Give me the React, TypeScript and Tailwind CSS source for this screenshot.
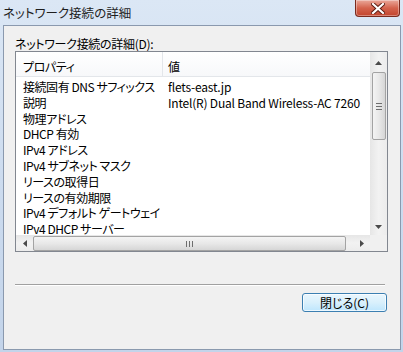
import React from "react";

const rows: [string, string][] = [
  ["接続固有 DNS サフィックス", "flets-east.jp"],
  ["説明", "Intel(R) Dual Band Wireless-AC 7260"],
  ["物理アドレス", ""],
  ["DHCP 有効", ""],
  ["IPv4 アドレス", ""],
  ["IPv4 サブネット マスク", ""],
  ["リースの取得日", ""],
  ["リースの有効期限", ""],
  ["IPv4 デフォルト ゲートウェイ", ""],
  ["IPv4 DHCP サーバー", ""],
];

function Tri({ dir }: { dir: "up" | "down" | "left" | "right" }) {
  const pts =
    dir === "up"
      ? "0,4 7,4 3.5,0"
      : dir === "down"
      ? "0,0 7,0 3.5,4"
      : dir === "left"
      ? "4,0 4,7 0,3.5"
      : "0,0 0,7 4,3.5";
  const w = dir === "up" || dir === "down" ? 7 : 4;
  const h = dir === "up" || dir === "down" ? 4 : 7;
  return (
    <svg width={w} height={h} viewBox={`0 0 ${w} ${h}`}>
      <polygon points={pts} fill="#4a4a4a" />
    </svg>
  );
}

export default function App() {
  return (
    <div
      className="w-[403px] h-[352px] flex flex-col bg-gradient-to-b from-[#dbe7f5] via-[#cddcef] to-[#c3d4ea] text-[12px] text-black [font-feature-settings:'palt']"
      style={{ fontFamily: '"Noto Sans CJK JP", "Noto Sans", sans-serif' }}
    >
      {/* title bar */}
      <div className="h-[25px] flex items-start justify-between">
        <span className="pl-[3px] pt-[4px] leading-[17px] text-[12.5px] text-[#1e1e1e]">
          ネットワーク接続の詳細
        </span>
        <div className="mr-[3px] w-[45px] h-[17px] rounded-b-[4px] border border-t-0 border-[#7a2b1e] bg-gradient-to-b from-[#e9a89b] via-[#d4634d] to-[#c2442c] flex items-center justify-center shadow-[inset_0_0_0_1px_rgba(255,255,255,0.35)]">
          <svg width="14" height="11" viewBox="0 0 14 11">
            <path d="M2 1 L12 10 M12 1 L2 10" stroke="#5a1a10" strokeWidth="4" strokeLinecap="square" />
            <path d="M2 1 L12 10 M12 1 L2 10" stroke="#ffffff" strokeWidth="2.2" strokeLinecap="square" />
          </svg>
        </div>
      </div>

      {/* client panel */}
      <div className="flex-1 ml-[3px] mr-[2px] mb-[2px] border border-[#8a99ae] bg-[#f0f0f0] flex flex-col">
        <div className="pl-[11px] pt-[10px] h-[25px] leading-[15px] tracking-[-0.3px]">ネットワーク接続の詳細(D):</div>

        {/* list box */}
        <div className="ml-[11px] w-[373px] h-[201px] border border-[#828790] bg-white flex flex-col">
          <div className="flex h-[183px]">
            {/* main list */}
            <div className="w-[354px] h-[183px] overflow-hidden flex flex-col">
              <div className="h-[25px] shrink-0 flex border-b border-[#e3e6ea] bg-gradient-to-b from-white to-[#f7f8fa]">
                <div className="w-[147px] pl-[7px] pt-[7px] leading-[16px] border-r border-[#e3e6ea] tracking-[-0.4px]">プロパティ</div>
                <div className="pl-[5px] pt-[7px] leading-[16px]">値</div>
              </div>
              <div className="pt-[2px]">
                {rows.map(([k, v], i) => (
                  <div key={i} className="flex h-[15.8px] leading-[15.8px] whitespace-nowrap">
                    <div className="w-[148px] pl-[7px] shrink-0 tracking-[-0.45px]">{k}</div>
                    <div className="pl-[4px] tracking-[-0.2px]">{v}</div>
                  </div>
                ))}
              </div>
            </div>
            {/* vertical scrollbar */}
            <div className="w-[17px] h-[183px] bg-gradient-to-r from-[#e6e6e6] via-[#f2f2f2] to-[#ececec] flex flex-col items-center">
              <div className="h-[20px] w-full flex items-center justify-center pt-[2px]">
                <Tri dir="up" />
              </div>
              <div className="w-[14px] h-[68px] rounded-[2px] border border-[#a3a3a3] bg-gradient-to-r from-[#f4f4f4] via-[#e8e8e8] to-[#d6d6d6] flex flex-col items-center justify-center gap-[2px]">
                <div className="w-[6px] h-[1px] bg-[#6e6e6e]" />
                <div className="w-[6px] h-[1px] bg-[#6e6e6e]" />
                <div className="w-[6px] h-[1px] bg-[#6e6e6e]" />
              </div>
              <div className="flex-1" />
              <div className="h-[17px] w-full flex items-center justify-center">
                <Tri dir="down" />
              </div>
            </div>
          </div>
          {/* horizontal scrollbar */}
          <div className="flex h-[16px] bg-gradient-to-b from-[#e6e6e6] via-[#f2f2f2] to-[#ececec]">
            <div className="w-[17px] flex items-center justify-center">
              <Tri dir="left" />
            </div>
            <div className="w-[313px] h-[15px] mt-[1px] rounded-[2px] border border-[#a3a3a3] bg-gradient-to-b from-[#f4f4f4] via-[#e8e8e8] to-[#d6d6d6] flex items-center justify-center gap-[2px]">
              <div className="w-[1px] h-[6px] bg-[#6e6e6e]" />
              <div className="w-[1px] h-[6px] bg-[#6e6e6e]" />
              <div className="w-[1px] h-[6px] bg-[#6e6e6e]" />
            </div>
            <div className="w-[7px]" />
            <div className="w-[17px] flex items-center justify-center">
              <Tri dir="right" />
            </div>
            <div className="w-[17px] bg-[#f0f0f0]" />
          </div>
        </div>

        {/* separator */}
        <div className="ml-[11px] mt-[32px] w-[370px] h-[2px] border-t border-[#a0a0a0] border-b border-b-white" />

        {/* button */}
        <div className="flex justify-end mr-[13px] mt-[7px]">
          <div className="w-[85px] h-[19px] rounded-[3px] border border-[#3c7fb1] bg-gradient-to-b from-[#eaf6fd] via-[#d9f0fc] to-[#bee6fd] shadow-[inset_0_0_0_1px_rgba(255,255,255,0.7)] flex items-center justify-center leading-[15px]">
            閉じる(C)
          </div>
        </div>
      </div>
    </div>
  );
}
